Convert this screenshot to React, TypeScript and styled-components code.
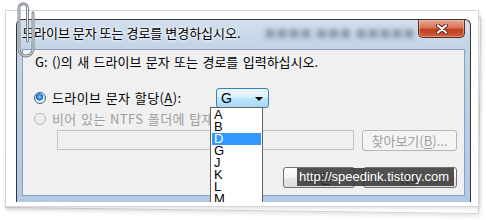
import React from 'react'
import styled, { createGlobalStyle } from 'styled-components'

const GlobalStyle = createGlobalStyle`
  html, body {
    margin: 0;
    padding: 0;
    background: #ffffff;
  }
  * {
    box-sizing: border-box;
  }
`

const KR = `'Noto Sans CJK KR', 'Liberation Sans', sans-serif`

const Stage = styled.div`
  position: relative;
  z-index: 0;
  width: 486px;
  height: 220px;
  overflow: hidden;
  background: #ffffff;
  padding: 10px 0 0 5px;
  font-family: ${KR};
`

const Paper = styled.div`
  position: relative;
  width: 474px;
  height: 197px;
  background: #ffffff;
  border: 1px solid #d6d6d6;
  box-shadow: 1px 2px 3px rgba(0, 0, 0, 0.1);
  padding: 8px 0 0 10px;
  &::before {
    content: '';
    position: absolute;
    inset: -1px;
    background: #ffffff;
    border: 1px solid #d2d2d2;
    transform: translate(1px, 4px) rotate(0.7deg);
    box-shadow: 1px 2px 4px rgba(0, 0, 0, 0.12);
    z-index: -1;
  }
`

const Clip = styled.svg`
  position: absolute;
  left: 14px;
  top: 0;
  z-index: 5;
`

const Window = styled.div`
  width: 455px;
  height: 183px;
  border: 1px solid #353535;
  border-bottom: none;
  border-radius: 6px 6px 0 0;
  background: linear-gradient(180deg, #d3dfec 0%, #c3d4e7 15%, #b8cde5 60%, #b1c9e4 100%);
  padding: 0 5px;
  display: flex;
  flex-direction: column;
  overflow: hidden;
`

const TitleBar = styled.div`
  height: 29px;
  display: flex;
  align-items: flex-start;
`

const TitleText = styled.div`
  margin-top: 5px;
  font-size: 13px;
  line-height: 16px;
  color: #000;
  white-space: nowrap;
  text-shadow: 0 0 5px #ffffff, 0 0 3px #ffffff;
`

const TitleBlur = styled.div`
  flex: 1;
  margin: 6px 0 0 24px;
  font-size: 11px;
  line-height: 14px;
  color: rgba(60, 72, 96, 0.45);
  filter: blur(2.5px);
  white-space: nowrap;
  overflow: hidden;
  letter-spacing: 1px;
`

const CloseButton = styled.div`
  flex: none;
  width: 47px;
  height: 18px;
  border: 1px solid #5c2c22;
  border-top: none;
  border-radius: 0 0 5px 5px;
  background: linear-gradient(180deg, #e7a892 0%, #d9735a 45%, #c2411f 55%, #cf5a3a 100%);
  box-shadow: inset 0 0 0 1px rgba(255, 210, 190, 0.45);
  display: flex;
  align-items: center;
  justify-content: center;
`

const Content = styled.div`
  position: relative;
  height: 147px;
  background: #f0f0f0;
  border: 1px solid #8aa0ba;
  display: flex;
  flex-direction: column;
  font-size: 13px;
  word-spacing: 1px;
`

const Instruction = styled.div`
  margin: 4px 0 0 12px;
  line-height: 16px;
  white-space: nowrap;
  word-spacing: 1.5px;
`

const OptionRow = styled.div<{ $top: number; $height: number }>`
  margin-top: ${(p) => p.$top}px;
  height: ${(p) => p.$height}px;
  padding-left: 11px;
  display: flex;
  align-items: center;
  gap: 6px;
`

const Radio = styled.span<{ $checked?: boolean; $disabled?: boolean }>`
  flex: none;
  width: 12px;
  height: 12px;
  border-radius: 50%;
  border: 1px solid ${(p) => (p.$disabled ? '#b9b9b9' : '#2f5f8c')};
  background: ${(p) =>
    p.$checked
      ? 'radial-gradient(circle at 45% 40%, #8fd0ff 0, #2d8ae0 28%, #1c5aa8 42%, #e8eef4 46%, #ffffff 100%)'
      : p.$disabled
      ? 'linear-gradient(180deg, #f4f4f4, #e6e6e6)'
      : '#ffffff'};
`

const OptionLabel = styled.span<{ $disabled?: boolean; $width?: number }>`
  width: ${(p) => (p.$width ? `${p.$width}px` : 'auto')};
  flex: none;
  line-height: 16px;
  white-space: nowrap;
  letter-spacing: 0.4px;
  color: ${(p) => (p.$disabled ? '#9d9d9d' : '#000')};
  u {
    text-underline-offset: 2px;
  }
`

const Combo = styled.div`
  width: 53px;
  height: 20px;
  border: 1px solid #3c7fb1;
  border-radius: 3px;
  background: linear-gradient(180deg, #eaf6fd 0%, #d9f0fc 45%, #bee6fd 50%, #a7d9f5 100%);
  display: flex;
  align-items: center;
  justify-content: space-between;
  padding: 0 5px 0 4px;
  font-family: 'Liberation Sans', sans-serif;
  font-size: 14px;
`

const Arrow = styled.span`
  width: 0;
  height: 0;
  border-left: 4px solid transparent;
  border-right: 4px solid transparent;
  border-top: 4px solid #000;
  margin-top: 1px;
`

const PathRow = styled.div`
  margin-top: 3px;
  height: 21px;
  padding: 0 7px 0 34px;
  display: flex;
  gap: 8px;
`

const PathInput = styled.div`
  width: 297px;
  height: 20px;
  border: 1px solid #c3c3c3;
  background: #f0f0f0;
`

const Button = styled.div<{ $width: number; $disabled?: boolean }>`
  flex: none;
  width: ${(p) => p.$width}px;
  height: 21px;
  border: 1px solid ${(p) => (p.$disabled ? '#b2b6ba' : '#707070')};
  border-radius: 3px;
  background: ${(p) =>
    p.$disabled ? '#f4f4f4' : 'linear-gradient(180deg, #fdfdfd 0%, #f4f4f4 50%, #e8e8e8 51%, #dddddd 100%)'};
  color: ${(p) => (p.$disabled ? '#a0a0a0' : '#000')};
  display: flex;
  align-items: center;
  justify-content: center;
  line-height: 16px;
  white-space: nowrap;
  u {
    text-underline-offset: 2px;
  }
`

const ButtonRow = styled.div`
  margin-top: 16px;
  padding-right: 7px;
  display: flex;
  justify-content: flex-end;
  gap: 8px;
`

const DropList = styled.ul`
  position: absolute;
  left: 187px;
  top: 57px;
  width: 53px;
  height: 96px;
  margin: 0;
  padding: 1px 1px 0;
  list-style: none;
  background: #ffffff;
  border: 1px solid #646464;
  border-bottom: none;
  overflow: hidden;
  z-index: 3;
  font-family: 'Liberation Sans', sans-serif;
  font-size: 13px;
  word-spacing: 0;
`

const DropItem = styled.li<{ $selected?: boolean }>`
  height: 12px;
  line-height: 12px;
  padding-left: 2px;
  background: ${(p) => (p.$selected ? '#3399ff' : 'transparent')};
  color: ${(p) => (p.$selected ? '#ffffff' : '#000')};
`

const Watermark = styled.div`
  position: absolute;
  left: 274px;
  top: 118px;
  width: 157px;
  height: 18px;
  background: rgba(52, 52, 52, 0.86);
  color: #ffffff;
  font-family: 'Liberation Sans', sans-serif;
  font-size: 13px;
  line-height: 18px;
  padding-left: 2px;
  white-space: nowrap;
  word-spacing: 0;
  z-index: 4;
`

const drives = ['A', 'B', 'D', 'G', 'J', 'K', 'L', 'M']

const clipPath = 'M13.5 41 L13.5 8 A4.2 4.2 0 0 0 5 8 L5 49 A7 7 0 0 0 19 49 L19 13'

export default function App() {
  return (
    <Stage>
      <GlobalStyle />
      <Clip width="24" height="58" viewBox="0 0 24 58">
        <path d={clipPath} fill="none" stroke="#6f757d" strokeWidth="2.8" strokeLinecap="round" />
        <path d={clipPath} fill="none" stroke="#e9edf1" strokeWidth="1" strokeLinecap="round" />
      </Clip>
      <Paper>
        <Window>
          <TitleBar>
            <TitleText>드라이브 문자 또는 경로를 변경하십시오.</TitleText>
            <TitleBlur>■■■■ ■■■ ■■■■■ ■■ ■■■■</TitleBlur>
            <CloseButton>
              <svg width="14" height="10" viewBox="0 0 14 10">
                <path d="M3 1.5 L11 8.5 M11 1.5 L3 8.5" stroke="#5a2418" strokeWidth="4" strokeLinecap="round" />
                <path d="M3 1.5 L11 8.5 M11 1.5 L3 8.5" stroke="#ffffff" strokeWidth="2.2" strokeLinecap="round" />
              </svg>
            </CloseButton>
          </TitleBar>
          <Content>
            <Instruction>G: ()의 새 드라이브 문자 또는 경로를 입력하십시오.</Instruction>
            <OptionRow $top={18} $height={20}>
              <Radio $checked />
              <OptionLabel $width={158}>
                드라이브 문자 할당(<u>A</u>):
              </OptionLabel>
              <Combo>
                <span>G</span>
                <Arrow />
              </Combo>
            </OptionRow>
            <OptionRow $top={3} $height={16}>
              <Radio $disabled />
              <OptionLabel $disabled>
                비어 있는 NTFS 폴더에 탑재(<u>M</u>):
              </OptionLabel>
            </OptionRow>
            <PathRow>
              <PathInput />
              <Button $width={95} $disabled>
                찾아보기(<u>B</u>)...
              </Button>
            </PathRow>
            <ButtonRow>
              <Button $width={72}>확인</Button>
              <Button $width={94}>취소</Button>
            </ButtonRow>
            <DropList>
              {drives.map((d) => (
                <DropItem key={d} $selected={d === 'D'}>
                  {d}
                </DropItem>
              ))}
            </DropList>
            <Watermark>http://speedink.tistory.com</Watermark>
          </Content>
        </Window>
      </Paper>
    </Stage>
  )
}
